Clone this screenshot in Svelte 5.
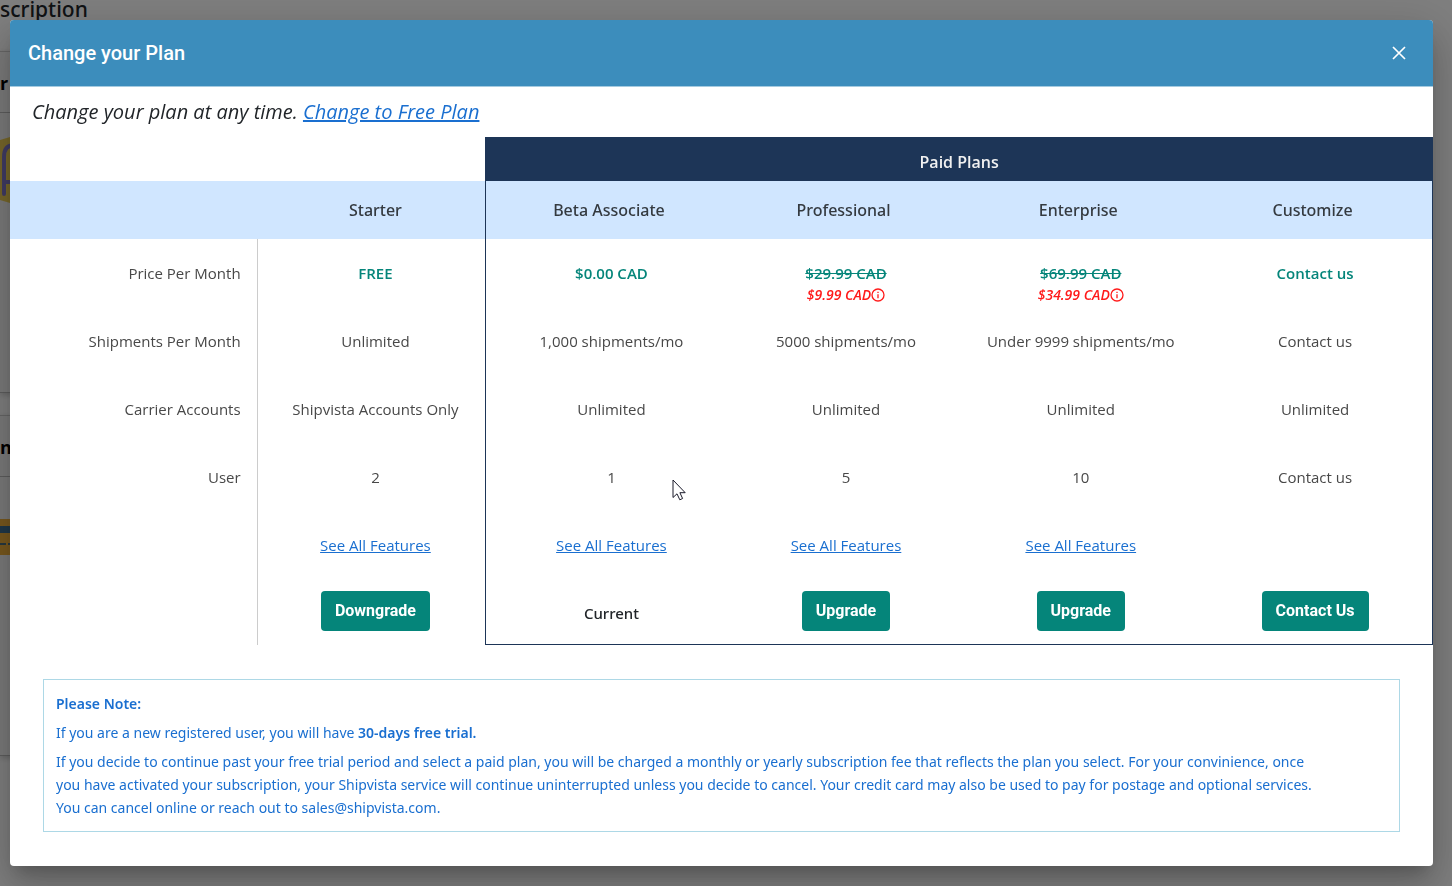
<script lang="ts">
  type Plan = {
    name: string;
    price: string;
    discount?: string;
    shipments: string;
    carriers: string;
    users: string;
    features: boolean;
    action?: string;
  };

  const plans: Plan[] = [
    { name: 'Starter', price: 'FREE', shipments: 'Unlimited', carriers: 'Shipvista Accounts Only', users: '2', features: true, action: 'Downgrade' },
    { name: 'Beta Associate', price: '$0.00 CAD', shipments: '1,000 shipments/mo', carriers: 'Unlimited', users: '1', features: true },
    { name: 'Professional', price: '$29.99 CAD', discount: '$9.99 CAD', shipments: '5000 shipments/mo', carriers: 'Unlimited', users: '5', features: true, action: 'Upgrade' },
    { name: 'Enterprise', price: '$69.99 CAD', discount: '$34.99 CAD', shipments: 'Under 9999 shipments/mo', carriers: 'Unlimited', users: '10', features: true, action: 'Upgrade' },
    { name: 'Customize', price: 'Contact us', shipments: 'Contact us', carriers: 'Unlimited', users: 'Contact us', features: false, action: 'Contact Us' },
  ];

  const rows: { label: string; key: 'shipments' | 'carriers' | 'users' }[] = [
    { label: 'Shipments Per Month', key: 'shipments' },
    { label: 'Carrier Accounts', key: 'carriers' },
    { label: 'User', key: 'users' },
  ];

  let open = true;
</script>

<!-- Page behind the dialog -->
<div class="page">
  <h1 class="page-title">scription</h1>
  <section class="card">
    <h2 class="card-title">r</h2>
    <div class="card-body">
      <svg class="plan-icon" width="48" height="66" viewBox="0 0 48 66" aria-hidden="true">
        <path d="M0 3 L10 0 H48 V66 H10 L0 63 Z" fill="#efcf55" />
        <path d="M4 57 V20 Q4 8 14 8 H48 M4 45 H48" fill="none" stroke="#8078c8" stroke-width="4" stroke-linecap="round" />
      </svg>
    </div>
  </section>
  <section class="card">
    <h2 class="card-title">n</h2>
    <div class="card-body short">
      <svg class="pay-icon" width="60" height="36" viewBox="0 0 60 36" aria-hidden="true">
        <rect width="60" height="36" fill="#f2b23c" />
        <rect y="7" width="60" height="7" fill="#3f7193" />
        <path d="M0 25 H60" stroke="#4c7080" stroke-width="2" stroke-dasharray="6 2" />
      </svg>
    </div>
  </section>
</div>

{#if open}
  <div class="backdrop">
    <div class="dialog" role="dialog" aria-modal="true" aria-labelledby="plan-title">
      <header class="dialog-header">
        <h2 id="plan-title">Change your Plan</h2>
        <button class="close" aria-label="Close" on:click={() => (open = false)}>
          <svg width="14" height="14" viewBox="0 0 14 14" aria-hidden="true">
            <path d="M1 1 L13 13 M13 1 L1 13" stroke="currentColor" stroke-width="1.7" />
          </svg>
        </button>
      </header>

      <p class="intro">Change your plan at any time. <a href="#free">Change to Free Plan</a></p>

      <table class="plans">
        <colgroup>
          <col class="col-label" />
          <col class="col-starter" />
          <col class="col-beta" />
          <col class="col-paid" />
          <col class="col-paid" />
          <col class="col-paid" />
        </colgroup>
        <thead>
          <tr class="group-row">
            <td colspan="2"></td>
            <th class="group" colspan="4" scope="colgroup">Paid Plans</th>
          </tr>
          <tr class="name-row">
            <td></td>
            {#each plans as plan}
              <th scope="col">{plan.name}</th>
            {/each}
          </tr>
        </thead>
        <tbody>
          <tr>
            <th scope="row">Price Per Month</th>
            {#each plans as plan}
              <td class="price">
                {#if plan.discount}
                  <s>{plan.price}</s>
                  <div class="discount">
                    <span>{plan.discount}</span>
                    <svg width="14" height="14" viewBox="0 0 14 14" aria-hidden="true">
                      <circle cx="7" cy="7" r="6" fill="none" stroke="currentColor" stroke-width="1.3" />
                      <path d="M7 6.2 V10.2 M7 3.7 V5" stroke="currentColor" stroke-width="1.3" />
                    </svg>
                  </div>
                {:else}
                  {plan.price}
                {/if}
              </td>
            {/each}
          </tr>
          {#each rows as row}
            <tr>
              <th scope="row">{row.label}</th>
              {#each plans as plan}
                <td>{plan[row.key]}</td>
              {/each}
            </tr>
          {/each}
          <tr>
            <th></th>
            {#each plans as plan}
              <td>
                {#if plan.features}
                  <a href="#features">See All Features</a>
                {/if}
              </td>
            {/each}
          </tr>
          <tr class="action-row">
            <th></th>
            {#each plans as plan}
              <td class:current={!plan.action}>
                {#if plan.action}
                  <button class="action">{plan.action}</button>
                {:else}
                  Current
                {/if}
              </td>
            {/each}
          </tr>
        </tbody>
      </table>

      <div class="note">
        <p><strong>Please Note:</strong></p>
        <p>If you are a new registered user, you will have <strong>30-days free trial.</strong></p>
        <p>
          If you decide to continue past your free trial period and select a paid plan, you will be charged a monthly or yearly
          subscription fee that reflects the plan you select. For your convinience, once<br />
          you have activated your subscription, your Shipvista service will continue uninterrupted unless you decide to cancel.
          Your credit card may also be used to pay for postage and optional services.<br />
          You can cancel online or reach out to sales@shipvista.com.
        </p>
      </div>
    </div>
  </div>
{/if}

<svg class="pointer" width="14" height="22" viewBox="0 0 14 22" aria-hidden="true">
  <path d="M1 1 V18.5 L5 14.8 L7.8 20.8 L10.6 19.5 L7.9 13.7 H13.2 Z" fill="#fff" stroke="#1a1a2a" stroke-width="1" />
</svg>

<style>
  :global(body) {
    font-family: "Segoe UI", "Open Sans", "Noto Sans", sans-serif;
    font-size: 15px;
    line-height: 20px;
    color: #212529;
    background: #fff;
  }

  h1,
  h2,
  p {
    margin: 0;
  }

  a {
    color: #1a6fd0;
  }

  /* page behind */
  .page {
    height: 100vh;
    overflow: hidden;
  }

  .page-title {
    height: 51px;
    font-family: "Segoe UI", "Noto Sans", sans-serif;
    font-size: 21px;
    line-height: 18px;
    font-weight: 500;
    color: #212529;
  }

  .card {
    width: 60%;
    margin-bottom: 22px;
    background: #f6f6f6;
    border-top: 1px solid #ccc;
    border-bottom: 1px solid #bbb;
    box-shadow: 0 2px 6px rgba(0, 0, 0, 0.2);
  }

  .card-title {
    height: 60px;
    border-bottom: 1px solid #bbb;
    font-size: 18px;
    line-height: 62px;
    font-weight: 700;
    color: #000;
  }

  .card-body {
    height: 255px;
    padding-top: 24px;
  }

  .card-body.short {
    height: 236px;
    padding-top: 42px;
  }

  /* dialog */
  .backdrop {
    position: fixed;
    inset: 0;
    box-sizing: border-box;
    padding: 20px 19px 20px 10px;
    background: rgba(0, 0, 0, 0.5);
    overflow: hidden;
  }

  .dialog {
    background: #fff;
    border-radius: 4px;
    overflow: hidden;
    box-shadow:
      0 11px 15px -7px rgba(0, 0, 0, 0.2),
      0 24px 38px 3px rgba(0, 0, 0, 0.14),
      0 9px 46px 8px rgba(0, 0, 0, 0.12);
  }

  .dialog-header {
    display: flex;
    align-items: center;
    justify-content: space-between;
    height: 66px;
    padding: 0 18px;
    background: #3c8dbc;
    border-bottom: 1px solid #a5cbe0;
    color: #fff;
  }

  .dialog-header h2 {
    font-family: Roboto, sans-serif;
    font-size: 20px;
    line-height: 24px;
    font-weight: 500;
  }

  .close {
    display: flex;
    padding: 9px;
    border: 0;
    background: none;
    color: #fff;
    cursor: pointer;
  }

  .intro {
    padding: 10px 22px;
    font-size: 20px;
    line-height: 30px;
    font-weight: 500;
    font-style: italic;
  }

  /* plan table */
  .plans {
    width: 100%;
    table-layout: fixed;
    border-collapse: separate;
    border-spacing: 0;
  }

  .col-label {
    width: 17.4%;
  }

  .col-starter {
    width: 16%;
  }

  .col-beta {
    width: 17.1%;
  }

  .col-paid {
    width: 16.5%;
  }

  .plans th,
  .plans td {
    padding: 0;
    text-align: center;
  }

  .group-row {
    height: 44px;
  }

  .plans .group {
    padding-top: 6px;
    background: #1d3557;
    color: #f1f1f1;
    font-size: 16px;
    font-weight: 600;
  }

  .name-row {
    height: 58px;
    background: #d0e6ff;
  }

  .name-row th {
    color: #343a40;
    font-family: "Segoe UI", "Noto Sans", sans-serif;
    font-size: 16px;
    font-weight: 500;
  }

  .plans .name-row th:nth-child(n + 3) {
    padding-right: 5px;
  }

  tbody tr {
    height: 68px;
  }

  tbody th,
  tbody td {
    color: #484848;
    font-weight: 400;
    vertical-align: top;
  }

  .plans tbody th,
  .plans tbody td {
    padding-top: 24px;
  }

  .plans tbody th {
    padding-right: 16px;
    border-right: 1px solid #ccc;
    text-align: right;
  }

  .plans tr:not(.group-row) > :nth-child(2),
  .plans tr:not(.group-row) > :nth-child(3) {
    padding-left: 8px;
  }

  .plans tr:not(.group-row) > :nth-child(3) {
    border-left: 1px solid #1d3557;
  }

  .plans tr:not(.group-row) > :nth-child(6) {
    border-right: 1px solid #1d3557;
  }

  .plans .price {
    color: #05857a;
    font-weight: 600;
  }

  .discount {
    display: flex;
    align-items: center;
    justify-content: center;
    color: #ff1a1a;
    font-size: 14px;
    line-height: 24px;
    font-style: italic;
  }

  .action-row {
    height: 66px;
  }

  .plans .action-row td {
    padding-top: 12px;
  }

  .action-row td:nth-child(n + 3) {
    border-bottom: 1px solid #1d3557;
  }

  .plans .action-row .current {
    padding-top: 24px;
    color: #212529;
    font-family: "Segoe UI", "Noto Sans", sans-serif;
    font-weight: 500;
  }

  .action {
    height: 40px;
    padding: 0 14px;
    border: 0;
    border-radius: 4px;
    background: #05857a;
    color: #fff;
    font-family: Roboto, sans-serif;
    font-size: 16px;
    line-height: 20px;
    font-weight: 700;
    cursor: pointer;
  }

  /* note */
  .note {
    display: flex;
    flex-direction: column;
    gap: 6px;
    margin: 34px 33px;
    padding: 12px;
    border: 1px solid #add8e6;
    color: #1a6fd0;
    font-family: "Segoe UI", "Noto Sans", sans-serif;
    font-size: 14px;
    line-height: 23px;
  }

  .note strong {
    font-weight: 600;
  }

  .pointer {
    position: absolute;
    left: 672px;
    top: 479px;
  }
</style>
